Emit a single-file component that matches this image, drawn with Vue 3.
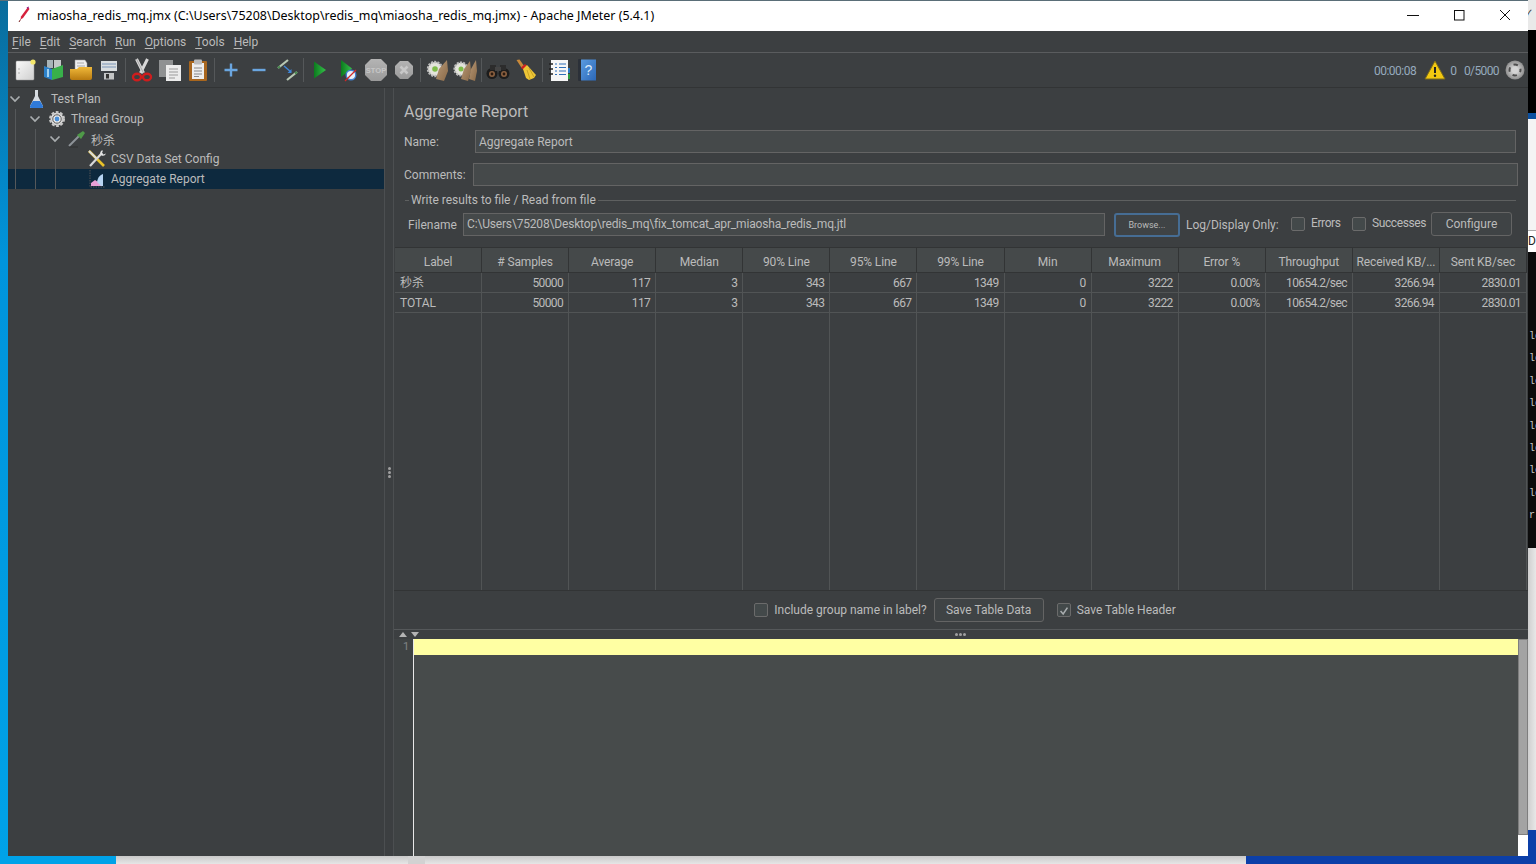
<template>
  <div class="desktop">
    <!-- bits of other windows showing behind JMeter -->
    <div class="behind behind--left" />
    <div class="behind behind--top" />
    <div class="behind behind--r1"><span>✓</span></div>
    <div class="behind behind--r2" />
    <div class="behind behind--r3" />
    <div class="behind behind--r4" />
    <div class="behind behind--r5"><span>D</span></div>
    <div class="behind behind--term">
      <p v-for="(l, i) in termLines" :key="i" :class="{ last: l === 'r' }">{{ l }}</p>
    </div>
    <div class="behind behind--r6" />
    <div class="behind behind--r7" />
    <div class="behind behind--b1" />
    <div class="behind behind--b2" />
    <div class="behind behind--b4" />
    <div class="behind behind--b3" />

    <svg class="defs" width="0" height="0">
      <defs>
        <linearGradient id="gPage" x1="0" y1="0" x2="1" y2="1"><stop offset="0" stop-color="#fafafa" /><stop offset="1" stop-color="#cfcfcf" /></linearGradient>
        <linearGradient id="gGreen" x1="0" y1="0" x2="1" y2="0"><stop offset="0" stop-color="#0c7a1e" /><stop offset="1" stop-color="#35c14a" /></linearGradient>
        <linearGradient id="gFolder" x1="0" y1="0" x2="0" y2="1"><stop offset="0" stop-color="#f0b93a" /><stop offset="1" stop-color="#b87a10" /></linearGradient>
        <linearGradient id="gStop" x1="0" y1="0" x2="0" y2="1"><stop offset="0" stop-color="#b4b4b4" /><stop offset="1" stop-color="#9a9a9a" /></linearGradient>
        <linearGradient id="gBook" x1="0" y1="0" x2="1" y2="1"><stop offset="0" stop-color="#5a9be0" /><stop offset="1" stop-color="#2c68b8" /></linearGradient>
        <linearGradient id="gBroom" x1="0" y1="0" x2="1" y2="1"><stop offset="0" stop-color="#b99a78" /><stop offset="1" stop-color="#8a6a48" /></linearGradient>
        <radialGradient id="gRound"><stop offset="0.3" stop-color="#d4d4d4" /><stop offset="1" stop-color="#8e8e8e" /></radialGradient>
      </defs>
    </svg>

    <div class="window">
      <!-- Title bar -->
      <header class="titlebar">
        <svg class="title-icon" viewBox="0 0 12 18" width="12" height="18">
          <path d="M10 1 L11.5 3 L5 12 L2.5 13.5 L3 10.5 Z" fill="#d6213c" />
          <path d="M8.5 1.5 L11 0.5 L10 3 Z" fill="#8a1f8e" />
          <path d="M2.5 13.5 L1 16" stroke="#7a2020" stroke-width="1" />
        </svg>
        <span class="title-text">miaosha_redis_mq.jmx (C:\Users\75208\Desktop\redis_mq\miaosha_redis_mq.jmx) - Apache JMeter (5.4.1)</span>
        <div class="win-btns">
          <svg viewBox="0 0 12 12" width="12" height="12"><path d="M0 6.5H12" stroke="#111" fill="none" /></svg>
          <svg viewBox="0 0 12 12" width="12" height="12"><rect x="1.5" y="1.5" width="9.5" height="9.5" stroke="#111" fill="none" /></svg>
          <svg viewBox="0 0 12 12" width="12" height="12"><path d="M1 1L11 11M11 1L1 11" stroke="#111" fill="none" /></svg>
        </div>
      </header>

      <!-- Menu -->
      <nav class="menubar">
        <span v-for="m in menus" :key="m"><u>{{ m[0] }}</u>{{ m.slice(1) }}</span>
      </nav>

      <!-- Toolbar -->
      <div class="toolbar">
        <div class="tools">
          <span class="tool"><svg viewBox="0 0 24 24"><rect x="3" y="3" width="18" height="19" rx="1" fill="url(#gPage)" stroke="#999" stroke-width=".5" /><circle cx="20" cy="4" r="2.6" fill="#f4e66a" /><circle cx="6" cy="11" r=".7" fill="#999" /><circle cx="6" cy="15" r=".7" fill="#999" /></svg></span>
          <span class="tool"><svg viewBox="0 0 24 24"><rect x="6" y="2" width="6" height="8" fill="#a8b4b8" /><rect x="13" y="2" width="7" height="8" fill="#c4c8c8" /><path d="M3 8l8 3v11l-8-3z" fill="#2c80c8" /><path d="M11 11l11-4v12l-11 3z" fill="#38b04a" /><rect x="6" y="11" width="2" height="8" fill="#9fd0f0" /></svg></span>
          <span class="tool"><svg viewBox="0 0 24 24"><path d="M6 2h10l2 3v9H6z" fill="#eee" stroke="#999" stroke-width=".5" /><path d="M8 5h7M8 8h8" stroke="#aaa" /><path d="M1 11h7l2-2h13v11a2 2 0 0 1-2 2H3a2 2 0 0 1-2-2z" fill="url(#gFolder)" /></svg></span>
          <span class="tool"><svg viewBox="0 0 24 24"><rect x="2" y="2" width="20" height="20.500" rx="1.500" fill="#3b3f44" /><rect x="4" y="3" width="16" height="10" fill="#d9dde0" /><path d="M5 6h14M5 9h14" stroke="#7a95b8" /><rect x="7" y="15" width="10" height="6.500" fill="#c2c4c6" /><rect x="9" y="16" width="3" height="4.500" fill="#333" /></svg></span>
          <i class="sep" />
          <span class="tool"><svg viewBox="0 0 24 24"><path d="M6.500 1L13.500 15M17.500 1L10.500 15" stroke="#d8d8d8" stroke-width="3" fill="none" /><path d="M6.500 1L13.500 15" stroke="#888" stroke-width=".6" /><ellipse cx="7" cy="19" rx="4" ry="3.200" fill="none" stroke="#cf1d1d" stroke-width="2.400" /><ellipse cx="17" cy="19" rx="4" ry="3.200" fill="none" stroke="#cf1d1d" stroke-width="2.400" /></svg></span>
          <span class="tool"><svg viewBox="0 0 24 24"><rect x="1" y="2" width="14" height="17" fill="#8f9192" /><rect x="8" y="7" width="15" height="16" fill="#ececec" /><path d="M11 11h9M11 14h9M11 17h9M11 20h6" stroke="#9a9a9a" /></svg></span>
          <span class="tool"><svg viewBox="0 0 24 24"><rect x="3" y="3" width="18" height="20" rx="1" fill="#a8661e" /><rect x="6" y="5" width="12" height="16" fill="#eee" /><rect x="8" y="1.500" width="8" height="5" rx="1" fill="#bbb" /><path d="M8 10h8M8 13h8M8 16h8M8 18.500h5" stroke="#888" /></svg></span>
          <i class="sep" />
          <span class="tool"><svg viewBox="0 0 24 24"><path d="M12 5.500v13M5.500 12h13" stroke="#6aa6e0" stroke-width="2.400" /></svg></span>
          <span class="tool"><svg viewBox="0 0 24 24"><path d="M5.500 12h13" stroke="#6aa6e0" stroke-width="2.400" /></svg></span>
          <span class="tool"><svg viewBox="0 0 24 24"><path d="M3 10L13 2" stroke="#b8c8b4" stroke-width="2.200" /><path d="M12 22L22 14" stroke="#b8c8b4" stroke-width="2.200" /><path d="M3 10l2-1.600M22 14l-2 1.600" stroke="#4a8a50" stroke-width="2.200" /><path d="M9 8l7 6" stroke="#3f86d8" stroke-width="1.500" /><path d="M16.500 11v4h-4z" fill="#3f86d8" /></svg></span>
          <i class="sep" />
          <span class="tool"><svg viewBox="0 0 24 24"><path d="M6 3.500L18 12 6 20.500z" fill="url(#gGreen)" /></svg></span>
          <span class="tool"><svg viewBox="0 0 24 24"><path d="M5 2L16 10.500 5 19z" fill="url(#gGreen)" /><circle cx="15" cy="17" r="4.800" fill="#e8f0f8" stroke="#3f7fd0" stroke-width="1.400" /><path d="M9 23L20 12" stroke="#d02828" stroke-width="1.300" /></svg></span>
          <span class="tool"><svg viewBox="0 0 24 24"><path d="M7 1h10l6 6v10l-6 6H7l-6-6V7z" fill="url(#gStop)" /><text x="12" y="15" text-anchor="middle" class="stop-txt">STOP</text></svg></span>
          <span class="tool"><svg viewBox="0 0 24 24"><path d="M8 3h8l5 5v8l-5 5H8l-5-5V8z" fill="url(#gStop)" /><path d="M8.500 8.500l7 7M15.500 8.500l-7 7" stroke="#c8c8c8" stroke-width="2.600" /></svg></span>
          <i class="sep" />
          <span class="tool"><svg viewBox="0 0 24 24"><circle cx="10" cy="11" r="7" fill="#e4e4dc" stroke="#bbb" stroke-dasharray="2 1.200" stroke-width="2.400" /><circle cx="10" cy="11" r="2.800" fill="#7fbc4a" /><path d="M22 2l-8 9-3 10 8 2 4-10z" fill="url(#gBroom)" /></svg></span>
          <span class="tool"><svg viewBox="0 0 24 24"><circle cx="8" cy="11" r="6.500" fill="#e4e4dc" stroke="#bbb" stroke-dasharray="2 1.200" stroke-width="2.200" /><circle cx="8" cy="11" r="2.500" fill="#7fbc4a" /><path d="M17 3l-6 8-3 10 7 2 3-10z" fill="url(#gBroom)" /><path d="M23 2l-5 9-2 10 6 2 2-10z" fill="url(#gBroom)" /></svg></span>
          <i class="sep" />
          <span class="tool"><svg viewBox="0 0 24 24"><circle cx="6" cy="15.500" r="5.500" fill="#1c1c1c" /><circle cx="18" cy="15.500" r="5.500" fill="#1c1c1c" /><circle cx="6" cy="16" r="3" fill="#8a6040" /><circle cx="18" cy="16" r="3" fill="#8a6040" /><circle cx="6" cy="16" r="1.400" fill="#2a1a10" /><circle cx="18" cy="16" r="1.400" fill="#2a1a10" /><rect x="4" y="7" width="6" height="5" fill="#2c2c2c" /><rect x="14" y="7" width="6" height="5" fill="#2c2c2c" /><rect x="9" y="9" width="6" height="4" fill="#444" /></svg></span>
          <span class="tool"><svg viewBox="0 0 24 24"><path d="M2.500 2l3-.5 5 7-2.500 2z" fill="#c8893a" /><path d="M7 9.500L11 6l2 2-3.500 4z" fill="#cf2020" /><path d="M9 11l4-4 9 10-2 3-5 2-3-2z" fill="#eec636" /><path d="M13 12l3 9M15 10l5 9" stroke="#b8941e" stroke-width=".7" /></svg></span>
          <i class="sep" />
          <span class="tool"><svg viewBox="0 0 24 24"><rect x="4" y="2" width="17" height="21" fill="#f6f6f6" /><rect x="21" y="10" width="2" height="5" fill="#2c7ac8" /><rect x="21" y="16" width="2" height="5" fill="#2c9a40" /><path d="M8 6h2M12 6h7M8 9.500h2M12 9.500h7M8 13h2M12 13h7M8 16.500h2M12 16.500h7" stroke="#2f6fb8" stroke-width="1.200" /><path d="M2 6h4M2 11h4M2 16h4" stroke="#222" stroke-width="1.600" /></svg></span>
          <span class="tool"><svg viewBox="0 0 24 24"><rect x="3" y="1" width="4" height="22" rx="1" fill="#2b3038" /><rect x="6" y="1.500" width="15" height="21" fill="url(#gBook)" /><text x="13.500" y="17" text-anchor="middle" class="help-txt">?</text></svg></span>
        </div>
        <div class="status">
          <span class="st-time">00:00:08</span>
          <svg class="warn" viewBox="0 0 22 20" width="22" height="20"><path d="M11 1L21 19H1Z" fill="#f2c811" stroke="#7a6a1a" stroke-linejoin="round" /><path d="M11 7v6" stroke="#222" stroke-width="2" /><circle cx="11" cy="15.800" r="1.200" fill="#222" /></svg>
          <span class="st-n">0</span>
          <span class="st-c">0/5000</span>
          <svg class="round" viewBox="0 0 20 20" width="20" height="20"><circle cx="10" cy="10" r="9.500" fill="url(#gRound)" /><circle cx="10" cy="10" r="5.500" fill="none" stroke="#4e4e4e" stroke-width="2" stroke-dasharray="4.500 4.140" stroke-dashoffset="2.200" /></svg>
        </div>
      </div>

      <div class="main">
        <!-- Tree -->
        <aside class="tree">
          <div v-for="row in tree" :key="row.label" class="row" :class="{ selected: row.selected }" :style="{ paddingLeft: row.depth * 20 + 'px' }">
            <svg v-if="row.open" class="chev" viewBox="0 0 14 14" width="14" height="14"><path d="M2.500 4.500L7 9l4.500-4.500" stroke="#a9adaf" stroke-width="1.700" fill="none" /></svg>
            <span v-else class="chev" />
            <span class="node-icon">
              <svg v-if="row.icon === 'plan'" viewBox="0 0 18 20" width="18" height="20"><path d="M7 1h3v6l5 10a1.500 1.500 0 0 1-1.300 2H3.300A1.500 1.500 0 0 1 2 17L7 7z" fill="#d8dde2" /><path d="M5 12h7l3 5a1.500 1.500 0 0 1-1.300 2H3.300A1.500 1.500 0 0 1 2 17z" fill="#2f7ad8" /></svg>
              <svg v-if="row.icon === 'group'" viewBox="0 0 20 20" width="20" height="20"><circle cx="10" cy="10" r="6.500" fill="#ddd" stroke="#c8c8c8" stroke-width="3" stroke-dasharray="2.600 1.500" /><circle cx="10" cy="10" r="4.200" fill="#f0f0f0" stroke="#555" /><circle cx="10" cy="10" r="2.400" fill="#4a90d9" /></svg>
              <svg v-if="row.icon === 'sampler'" viewBox="0 0 20 20" width="20" height="20"><path d="M2 17L12 7" stroke="#8d9398" stroke-width="2" /><path d="M10 6l4 4 4-6-2-2z" fill="#4f9a48" /><path d="M2 18h9" stroke="#222" opacity=".5" /></svg>
              <svg v-if="row.icon === 'config'" viewBox="0 0 20 20" width="20" height="20"><path d="M2 2l15 15" stroke="#e8c22a" stroke-width="2.600" /><path d="M2 2l8 8" stroke="#ddd" stroke-width="2" /><path d="M15 4L3 17" stroke="#d8d8d8" stroke-width="2.200" /><path d="M14.500 1.500a3.500 3.500 0 0 0 0 5 3.500 3.500 0 0 0 4.500-2l-2.500 1-1.500-1.500 1-2.500z" fill="#e4e4e4" /></svg>
              <svg v-if="row.icon === 'report'" viewBox="0 0 20 20" width="20" height="20"><path d="M3 1v17h15" stroke="#555" stroke-dasharray="1.500 1" fill="none" /><path d="M4 17v-3l4-3 3 2 3-2v6z" fill="#e8a0d8" /><path d="M10 13c1-5 3-7 6-8v12h-2z" fill="#b6d4f2" /></svg>
            </span>
            <span class="node-label">{{ row.label }}</span>
            <i v-for="n in row.guides" :key="n" class="guide" :style="{ left: n * 20 + 7 + 'px' }" />
          </div>
          <i class="guide guide--stub" />
          <i class="guide guide--stub2" />
          <i class="guide guide--stub3" />
        </aside>

        <!-- Divider -->
        <div class="divider"><b /><b /><b /></div>

        <!-- Report pane -->
        <section class="pane">
          <div class="top">
            <h1 class="pane-title">Aggregate Report</h1>
            <div class="form-row form-row--name">
              <label>Name:</label>
              <div class="field">Aggregate Report</div>
            </div>
            <div class="form-row form-row--comments">
              <label>Comments:</label>
              <div class="field" />
            </div>
            <div class="group">
              <i class="group-tick" />
              <span>Write results to file / Read from file</span>
              <i class="group-line" />
            </div>
            <div class="file-row">
              <label>Filename</label>
              <div class="field field--file">C:\Users\75208\Desktop\redis_mq\fix_tomcat_apr_miaosha_redis_mq.jtl</div>
              <button class="btn btn--browse">Browse...</button>
              <span class="log-label">Log/Display Only:</span>
              <span class="check" /><span class="check-label check-label--errors">Errors</span>
              <span class="check" /><span class="check-label check-label--ok">Successes</span>
              <button class="btn btn--config">Configure</button>
            </div>
          </div>

          <div class="table">
            <div v-for="c in columns" :key="c" class="th">{{ c }}</div>
            <template v-for="(r, i) in rows" :key="i">
              <div v-for="(v, j) in r" :key="j" class="td" :class="{ 'td--first': j === 0 }">{{ v }}</div>
            </template>
            <div v-for="c in columns" :key="c" class="filler" />
          </div>

          <div class="table-actions">
            <span class="check" />
            <span class="check-label">Include group name in label?</span>
            <button class="btn btn--save">Save Table Data</button>
            <span class="check check--on">
              <svg viewBox="0 0 14 14" width="14" height="14"><path d="M3 7l3 3.500L11 3" stroke="#a9adaf" stroke-width="1.800" fill="none" /></svg>
            </span>
            <span class="check-label">Save Table Header</span>
          </div>

          <div class="split">
            <span class="tri tri--up" />
            <span class="tri tri--down" />
            <span class="split-dots"><b /><b /><b /></span>
          </div>

          <div class="editor">
            <div class="gutter">1</div>
            <div class="text-area"><div class="current-line" /></div>
            <div class="scroll"><div class="thumb" /><div class="corner" /></div>
          </div>
        </section>
      </div>
    </div>
  </div>
</template>

<script setup>
const menus = ['File', 'Edit', 'Search', 'Run', 'Options', 'Tools', 'Help']

const tree = [
  { label: 'Test Plan', depth: 0, open: true, icon: 'plan', guides: [] },
  { label: 'Thread Group', depth: 1, open: true, icon: 'group', guides: [] },
  { label: '秒杀', depth: 2, open: true, icon: 'sampler', guides: [] },
  { label: 'CSV Data Set Config', depth: 3, open: false, icon: 'config', guides: [0, 1, 2] },
  { label: 'Aggregate Report', depth: 3, open: false, icon: 'report', selected: true, guides: [0, 1, 2] },
]

const columns = ['Label', '# Samples', 'Average', 'Median', '90% Line', '95% Line', '99% Line', 'Min', 'Maximum', 'Error %', 'Throughput', 'Received KB/...', 'Sent KB/sec']

const values = ['50000', '117', '3', '343', '667', '1349', '0', '3222', '0.00%', '10654.2/sec', '3266.94', '2830.01']
const rows = [['秒杀', ...values], ['TOTAL', ...values]]

const termLines = ['lc', 'lc', 'lc', 'lc', 'lc', 'lc', 'lc', 'lc', 'r']
</script>

<style>
html, body { margin: 0; background: #0a0a0a; overflow: hidden; }
</style>

<style scoped>
* { box-sizing: border-box; }

.desktop {
  position: relative;
  width: 1536px;
  height: 864px;
  overflow: hidden;
  font-family: Roboto, "Noto Sans CJK SC", sans-serif;
  font-size: 12px;
  color: #bbbbbb;
}

/* what is behind the window */
.behind { position: absolute; overflow: hidden; }
.behind--left { left: 0; top: 0; width: 8px; height: 864px; background: linear-gradient(#0a6c9c, #0094dc 30%, #00a2e8); }
.behind--top { left: 0; top: 0; width: 1536px; height: 1px; background: #5a6e78; }
.behind--r1 { left: 1528px; top: 0; width: 8px; height: 30px; background: #e9e9e9; color: #333; font-size: 11px; line-height: 30px; }
.behind--r1 span { margin-left: -4px; }
.behind--r2 { left: 1528px; top: 30px; width: 8px; height: 83px; background: #000; }
.behind--r3 { left: 1528px; top: 113px; width: 8px; height: 6px; background: #0c50a0; }
.behind--r4 { left: 1528px; top: 119px; width: 8px; height: 111px; background: #f4f4f4; }
.behind--r5 { left: 1528px; top: 230px; width: 8px; height: 22px; background: #fff; border-top: 1px solid #aaa; color: #222; line-height: 20px; }
.behind--term { left: 1528px; top: 252px; width: 8px; height: 296px; background: #0c0c0c; color: #c8c8c8; font: 10px "Liberation Mono", monospace; padding: 78px 0 0 1px; }
.behind--term p { margin: 0 0 8.400px; line-height: 14px; }
.behind--term p.last { margin-top: 1px; }
.behind--r6 { left: 1528px; top: 548px; width: 8px; height: 282px; background: linear-gradient(90deg, #cfcfcf, #e8e8e8); }
.behind--r7 { left: 1528px; top: 830px; width: 8px; height: 34px; background: #0c3fa8; }
.behind--b1 { left: 0; top: 856px; width: 116px; height: 8px; background: #00a2e8; }
.behind--b2 { left: 116px; top: 856px; width: 1130px; height: 8px; background: linear-gradient(#c9c9c9, #e6e6e6); }
.behind--b4 { left: 408px; top: 856px; width: 17px; height: 8px; background: #d2d2d2; }
.behind--b3 { left: 1246px; top: 856px; width: 290px; height: 8px; background: #0c3fa8; }
.defs { position: absolute; }

/* window */
.window {
  position: absolute;
  left: 8px;
  top: 1px;
  width: 1520px;
  height: 855px;
  display: flex;
  flex-direction: column;
  background: #3c3f41;
}

.titlebar {
  flex: none;
  height: 30px;
  background: #fff;
  display: flex;
  align-items: center;
  padding-left: 10px;
  color: #000;
  font-family: "Noto Sans", sans-serif;
}
.title-icon { margin-right: 7px; margin-top: -3px; }
.title-text { font-size: 12.440px; margin-top: -2px; }
.win-btns {
  margin-left: auto;
  display: flex;
  gap: 34px;
  padding-right: 17px;
  margin-top: -2px;
}

.menubar {
  flex: none;
  height: 22px;
  display: flex;
  gap: 9px;
  align-items: center;
  padding-left: 4px;
  border-bottom: 1px solid #5a5c5e;
}
.menubar u { text-underline-offset: 2px; }

.toolbar {
  flex: none;
  height: 35px;
  display: flex;
  align-items: center;
  padding-left: 3px;
  border-bottom: 1px solid #323435;
}
.tools { display: flex; align-items: center; }
.tool { width: 28px; height: 28px; display: flex; align-items: center; justify-content: center; }
.tool svg { width: 24px; height: 24px; }
.sep { width: 1px; height: 24px; background: #55585a; margin: 0 2px; }
.stop-txt { font: bold 7.500px "Liberation Sans", sans-serif; fill: #c6c6c6; }
.help-txt { font: 14px "Liberation Sans", sans-serif; fill: #dcebfa; }
.status { margin-left: auto; display: flex; align-items: center; color: #96aabd; padding-right: 3px; }
.st-time { letter-spacing: -0.5px; margin-top: 1px; }
.warn { margin: 0 4px 0 8px; }
.st-n { margin-right: 7px; margin-top: 1px; }
.st-c { letter-spacing: -0.6px; margin-top: 1px; }
.round { margin-left: 6px; }

.main { flex: 1; display: flex; min-height: 0; }

/* tree */
.tree {
  position: relative;
  width: 376px;
  flex: none;
  padding-top: 1px;
}
.row {
  position: relative;
  height: 20px;
  display: flex;
  align-items: center;
}
.row.selected { background: #0d293e; }
.chev { width: 14px; height: 14px; flex: none; }
.node-icon { width: 20px; height: 20px; margin-left: 5px; margin-right: 4px; flex: none; display: flex; justify-content: center; }
.node-label { white-space: nowrap; }
.guide { position: absolute; top: 0; bottom: 0; width: 1px; background: #55585a; }
.guide--stub { left: 7px; top: 21px; bottom: auto; height: 60px; }
.guide--stub2 { left: 27px; top: 41px; bottom: auto; height: 40px; }
.guide--stub3 { left: 47px; top: 61px; bottom: auto; height: 20px; }

.divider {
  flex: none;
  width: 10px;
  border-left: 1px solid #4c4f51;
  border-right: 1px solid #4c4f51;
  display: flex;
  flex-direction: column;
  align-items: center;
  justify-content: center;
  gap: 1px;
}
.divider b { width: 3px; height: 3px; border-radius: 50%; background: #a0a0a0; }

/* right pane */
.pane { flex: 1; min-width: 0; display: flex; flex-direction: column; }
.top { flex: none; height: 159px; padding-left: 10px; }
.pane-title {
  margin: 0;
  padding-top: 13px;
  height: 42px;
  font-size: 16px;
  font-weight: 400;
  line-height: 22px;
  letter-spacing: -0.05px;
}
.form-row { display: flex; align-items: center; }
.form-row--name { height: 23px; margin-bottom: 10px; padding-right: 12px; }
.form-row--name label { width: 71px; padding-top: 1px; }
.form-row--comments { height: 23px; padding-right: 10px; }
.form-row--comments label { width: 69px; }
.field {
  flex: 1;
  height: 23px;
  background: #45494a;
  border: 1px solid #646464;
  line-height: 22px;
  padding-left: 3px;
  white-space: nowrap;
}
.group { display: flex; align-items: center; margin: 5px 12px 0 1px; height: 18px; }
.group-tick { width: 4px; height: 1px; background: #5e6060; margin-right: 2px; }
.group-line { flex: 1; height: 1px; background: #5e6060; margin-left: 2px; }
.file-row { display: flex; align-items: center; height: 25px; margin-top: 3px; padding-left: 4px; }
.file-row label { width: 55px; flex: none; }
.field--file { flex: none; width: 642px; padding-left: 3px; letter-spacing: -0.17px; line-height: 21px; }
.btn {
  font: inherit;
  color: inherit;
  background: #3f4345;
  border: 1px solid #646464;
  border-radius: 3px;
  height: 24px;
  padding: 0;
}
.btn--browse { width: 66px; margin-left: 9px; font-size: 9px; border: 2px solid #466d94; }
.log-label { margin-left: 6px; width: 94px; flex: none; letter-spacing: -0.03px; }
.check {
  width: 14px;
  height: 14px;
  flex: none;
  border: 1px solid #6b6b6b;
  border-radius: 2px;
  background: #43494a;
  display: inline-flex;
}
.file-row .check { margin: -2px 6px 0 11px; }
.file-row .check-label { margin-top: -3px; flex: none; letter-spacing: -0.4px; }
.check-label--errors { width: 30px; }
.check-label--ok { width: 52px; }
.btn--config { width: 81px; margin-left: 7px; margin-top: -1px; }

/* table */
.table {
  flex: none;
  height: 343px;
  margin-left: 1px;
  margin-right: 1px;
  display: grid;
  grid-template-columns: repeat(13, 1fr);
  grid-template-rows: 26px 20px 20px 1fr;
}
.th {
  background: #45494a;
  border-right: 1px solid #323435;
  border-top: 1px solid #323435;
  border-bottom: 1px solid #323435;
  display: flex;
  align-items: center;
  justify-content: center;
  white-space: nowrap;
  padding-top: 3px;
  letter-spacing: -0.12px;
}
.td {
  border-right: 1px solid #515455;
  border-bottom: 1px solid #515455;
  text-align: right;
  padding: 1px 5px 0 0;
  line-height: 19px;
  white-space: nowrap;
  letter-spacing: -0.6px;
}
.td--first { text-align: left; padding-left: 5px; letter-spacing: 0; }
.filler { border-right: 1px solid #515455; }

.table-actions {
  flex: none;
  height: 39px;
  border-top: 1px solid #323435;
  display: flex;
  align-items: center;
  justify-content: center;
  padding-left: 8px;
}
.table-actions .check-label { margin-left: 6px; }
.btn--save { width: 110px; margin: 0 13px 0 7px; }

.split {
  flex: none;
  height: 10px;
  border-top: 1px solid #55585a;
  position: relative;
}
.tri { position: absolute; top: 2px; width: 0; height: 0; border-left: 4px solid transparent; border-right: 4px solid transparent; }
.tri--up { left: 5px; border-bottom: 5px solid #b4b4b4; }
.tri--down { left: 17px; border-top: 5px solid #b4b4b4; }
.split-dots { position: absolute; left: 561px; top: 3px; display: flex; gap: 1px; }
.split-dots b { width: 3px; height: 3px; border-radius: 50%; background: #a0a0a0; }

/* editor */
.editor { flex: 1; display: flex; min-height: 0; }
.gutter {
  width: 20px;
  flex: none;
  border-right: 1px solid #e8e8e8;
  background: #3f4344;
  color: #7f8486;
  font-size: 11px;
  line-height: 16px;
  padding-left: 9px;
}
.text-area { flex: 1; background: #474b4b; }
.current-line { height: 16px; background: #ffffa3; }
.scroll { width: 10px; flex: none; display: flex; flex-direction: column; }
.thumb { height: 196px; background: #a3a3a3; border: 1px solid #7e7e7e; }
.corner { flex: 1; background: #fff; }
</style>
